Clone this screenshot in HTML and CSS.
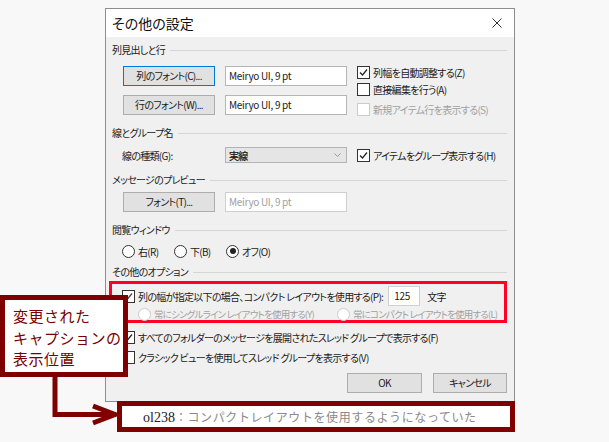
FILE: index.html
```html
<!DOCTYPE html>
<html>
<head>
    <meta charset="utf-8">
    <title>その他の設定</title>
    <link rel="stylesheet" href="styles.css">
</head>
<body>
<div class="page">
    <div class="dialog">
        <div class="titlebar">
            <span class="title">その他の設定</span>
            <svg class="close" width="10" height="10" viewBox="0 0 10 10"><path d="M0.5 0.5 L9.5 9.5 M9.5 0.5 L0.5 9.5" stroke="#333" stroke-width="1"/></svg>
        </div>
        <div class="content">
            <!-- 列見出しと行 -->
            <div class="group-title">列見出しと行</div>
            <div class="fonts">
                <div class="font-grid">
                    <button class="btn focused">列のフォント(C)...</button>
                    <div class="textbox">Meiryo UI, 9 pt</div>
                    <button class="btn">行のフォント(W)...</button>
                    <div class="textbox">Meiryo UI, 9 pt</div>
                </div>
                <div class="checks">
                    <div class="check"><span class="cb"><svg width="11" height="11" viewBox="0 0 11 11"><path d="M2 5.5 L4.5 8 L9 2.5" fill="none" stroke="#222" stroke-width="1.2"/></svg></span>列幅を自動調整する(Z)</div>
                    <div class="check"><span class="cb"></span>直接編集を行う(A)</div>
                    <div class="check disabled new-row"><span class="cb"></span>新規アイテム行を表示する(S)</div>
                </div>
            </div>

            <!-- 線とグループ名 -->
            <div class="group-title">線とグループ名</div>
            <div class="line-row">
                <span class="field-label">線の種類(G):</span>
                <div class="select">
                    <span class="select-value">実線</span>
                    <svg width="7" height="4" viewBox="0 0 7 4"><path d="M0.5 0.5 L3.5 3.5 L6.5 0.5" fill="none" stroke="#999" stroke-width="1"/></svg>
                </div>
                <div class="check"><span class="cb"><svg width="11" height="11" viewBox="0 0 11 11"><path d="M2 5.5 L4.5 8 L9 2.5" fill="none" stroke="#222" stroke-width="1.2"/></svg></span>アイテムをグループ表示する(H)</div>
            </div>

            <!-- メッセージのプレビュー -->
            <div class="group-title">メッセージのプレビュー</div>
            <div class="preview-row">
                <button class="btn">フォント(T)...</button>
                <div class="textbox disabled">Meiryo UI, 9 pt</div>
            </div>

            <!-- 閲覧ウィンドウ -->
            <div class="group-title">閲覧ウィンドウ</div>
            <div class="radios">
                <div class="radio"><span class="rb"></span>右(R)</div>
                <div class="radio"><span class="rb"></span>下(B)</div>
                <div class="radio"><span class="rb on"></span>オフ(O)</div>
            </div>

            <!-- その他のオプション -->
            <div class="group-title">その他のオプション</div>
            <div class="highlight">
                <div class="compact-row">
                    <div class="check"><span class="cb"><svg width="11" height="11" viewBox="0 0 11 11"><path d="M2 5.5 L4.5 8 L9 2.5" fill="none" stroke="#444" stroke-width="1.2"/></svg></span>列の幅が指定以下の場合、コンパクト レイアウトを使用する(P):</div>
                    <div class="textbox small">125</div>
                    <span>文字</span>
                </div>
                <div class="layout-row">
                    <div class="radio disabled single"><span class="rb"></span>常にシングルライン レイアウトを使用する(Y)</div>
                    <div class="radio disabled"><span class="rb"></span>常にコンパクト レイアウトを使用する(L)</div>
                </div>
            </div>
            <div class="check option first"><span class="cb"><svg width="11" height="11" viewBox="0 0 11 11"><path d="M2 5.5 L4.5 8 L9 2.5" fill="none" stroke="#222" stroke-width="1.2"/></svg></span>すべてのフォルダーのメッセージを展開されたスレッド グループで表示する(F)</div>
            <div class="check option"><span class="cb"></span>クラシック ビューを使用してスレッド グループを表示する(V)</div>

            <div class="footer">
                <button class="btn ok">OK</button>
                <button class="btn cancel">キャンセル</button>
            </div>
        </div>
    </div>

    <div class="caption"><span class="code">ol238</span><span class="desc">：コンパクトレイアウトを使用するようになっていた</span></div>

    <!-- 注記と矢印 -->
    <div class="callout">
        <div>変更された</div>
        <div>キャプションの</div>
        <div>表示位置</div>
    </div>
    <svg class="arrow" width="85" height="60" viewBox="0 0 85 60">
        <path d="M15 6 L15 44.5 L76 44.5" fill="none" stroke="#7f0000" stroke-width="5"/>
        <path d="M53 36 L75 44.5 L53 53" fill="none" stroke="#7f0000" stroke-width="5"/>
    </svg>
</div>
</body>
</html>
```

FILE: styles.css
```css
body {
    margin: 0;
    background-color: #f8f8f8;
    font-family: "Noto Sans CJK JP", sans-serif;
    font-size: 10px;
    letter-spacing: -0.7px;
    color: #1a1a1a;
    font-feature-settings: "palt";
}
.page {
    position: relative;
    padding: 8px 0 0 105px;
    height: 434px;
    box-sizing: border-box;
}
.dialog {
    width: 410px;
    border: 1px solid #8e8e8e;
    background-color: #f0f0f0;
    box-sizing: border-box;
}
.titlebar {
    height: 28px;
    background-color: #fff;
    display: flex;
    align-items: center;
    justify-content: space-between;
    padding: 0 12px 0 6px;
}
.title {
    font-size: 14px;
    line-height: 16px;
    letter-spacing: 0;
    color: #111;
}
.content {
    padding: 6px 7px 8px 6px;
}
.group-title {
    display: flex;
    align-items: center;
    gap: 5px;
    height: 14px;
    line-height: 14px;
    color: #222;
}
.group-title::after {
    content: "";
    flex: 1;
    height: 1px;
    background-color: #d5d5d5;
}
.btn {
    height: 20px;
    border: 1px solid #adadad;
    background-color: #e1e1e1;
    font: inherit;
    letter-spacing: inherit;
    color: #1a1a1a;
    padding: 0;
    line-height: 18px;
}
.btn.focused {
    border-color: #0078d7;
}
.textbox {
    height: 20px;
    box-sizing: border-box;
    border: 1px solid #b5b5b5;
    background-color: #fff;
    padding-left: 3px;
    line-height: 18px;
    white-space: nowrap;
    letter-spacing: -0.3px;
}
.textbox.disabled {
    color: #a0a0a0;
    border-color: #cfcfcf;
}
.check {
    display: flex;
    align-items: center;
    gap: 3px;
    white-space: nowrap;
}
.cb {
    width: 11px;
    height: 11px;
    border: 1px solid #333;
    background-color: #fff;
    display: inline-block;
    flex: none;
}
.cb svg {
    display: block;
}
.disabled {
    color: #a0a0a0;
}
.disabled .cb, .disabled .rb {
    border-color: #cccccc;
}
.radio {
    display: flex;
    align-items: center;
    gap: 3px;
    white-space: nowrap;
}
.rb {
    width: 11px;
    height: 11px;
    border: 1px solid #333;
    border-radius: 50%;
    background-color: #fff;
    flex: none;
    display: flex;
    align-items: center;
    justify-content: center;
}
.rb.on::after {
    content: "";
    width: 6px;
    height: 6px;
    border-radius: 50%;
    background-color: #222;
}

/* 列見出しと行 */
.fonts {
    display: flex;
    align-items: flex-start;
    gap: 10px;
    height: 49px;
    margin-top: 9px;
    padding-left: 11px;
}
.font-grid {
    display: grid;
    grid-template-columns: 92px 122px;
    column-gap: 10px;
    row-gap: 9px;
}
.checks {
    display: flex;
    flex-direction: column;
    margin-top: -2px;
}
.checks .check {
    height: 17px;
}
.checks .new-row {
    margin-top: 3px;
}
.fonts + .group-title {
    margin-top: 11px;
}

/* 線とグループ名 */
.line-row {
    display: grid;
    grid-template-columns: 93px 122px auto;
    column-gap: 10px;
    align-items: center;
    height: 16px;
    margin-top: 7px;
    padding-left: 10px;
}
.select {
    height: 16px;
    box-sizing: border-box;
    background-color: #e5e5e5;
    border: 1px solid #b3b3b3;
    display: flex;
    align-items: center;
    justify-content: space-between;
    padding: 0 5px 0 3px;
}
.select-value {
    color: #111;
    -webkit-text-stroke: 0.2px #111;
}
.line-row + .group-title {
    margin-top: 10px;
}

/* メッセージのプレビュー */
.preview-row {
    display: grid;
    grid-template-columns: 92px 122px;
    column-gap: 10px;
    margin-top: 5px;
    padding-left: 11px;
}
.preview-row + .group-title {
    margin-top: 11px;
}

/* 閲覧ウィンドウ */
.radios {
    display: flex;
    align-items: center;
    height: 16px;
    margin-top: 6px;
    padding-left: 10px;
}
.radios .radio {
    width: 52px;
}
.radios + .group-title {
    margin-top: 6px;
}

/* その他のオプション */
.highlight {
    margin: 2px 0 0 -3px;
    height: 36px;
    border: 3px solid #ff0026;
    padding-left: 10px;
}
.compact-row {
    display: flex;
    align-items: center;
    height: 20px;
    margin-top: 2px;
}
.textbox.small {
    width: 32px;
    margin: 0 7px 0 5px;
    padding-left: 5px;
    border-color: #d0d0d0;
}
.layout-row {
    display: flex;
    align-items: center;
    height: 14px;
    margin-top: 1px;
    padding-left: 16px;
    font-size: 9.5px;
    letter-spacing: -0.8px;
}
.radio.single {
    width: 199px;
}
.option {
    height: 14px;
    margin-top: 6px;
    padding-left: 10px;
}
.option.first {
    margin-top: 7px;
}
.footer {
    display: flex;
    justify-content: flex-end;
    gap: 11px;
    margin-top: 9px;
}
.btn.ok {
    width: 75px;
}
.btn.cancel {
    width: 74px;
}

/* キャプション */
.caption {
    margin: -1px 0 0 12px;
    width: 398px;
    height: 31px;
    box-sizing: border-box;
    border: 5px solid #800000;
    background-color: #fff;
    padding-left: 21px;
    line-height: 21px;
    white-space: nowrap;
    letter-spacing: 0;
    font-feature-settings: normal;
}
.code {
    font-family: "Liberation Serif", serif;
    font-size: 14px;
    color: #222;
}
.desc {
    font-size: 12px;
    letter-spacing: 0.6px;
    color: #8a8a8a;
}
.callout {
    position: absolute;
    left: 0;
    top: 295px;
    width: 128px;
    height: 82px;
    box-sizing: border-box;
    border: 5px solid #7f0000;
    background-color: #fff;
    padding: 5px 0 0 8px;
    font-size: 15px;
    line-height: 21.5px;
    letter-spacing: 0.5px;
    color: #7a0000;
    font-feature-settings: normal;
    white-space: nowrap;
}
.arrow {
    position: absolute;
    left: 40px;
    top: 370px;
}
```
